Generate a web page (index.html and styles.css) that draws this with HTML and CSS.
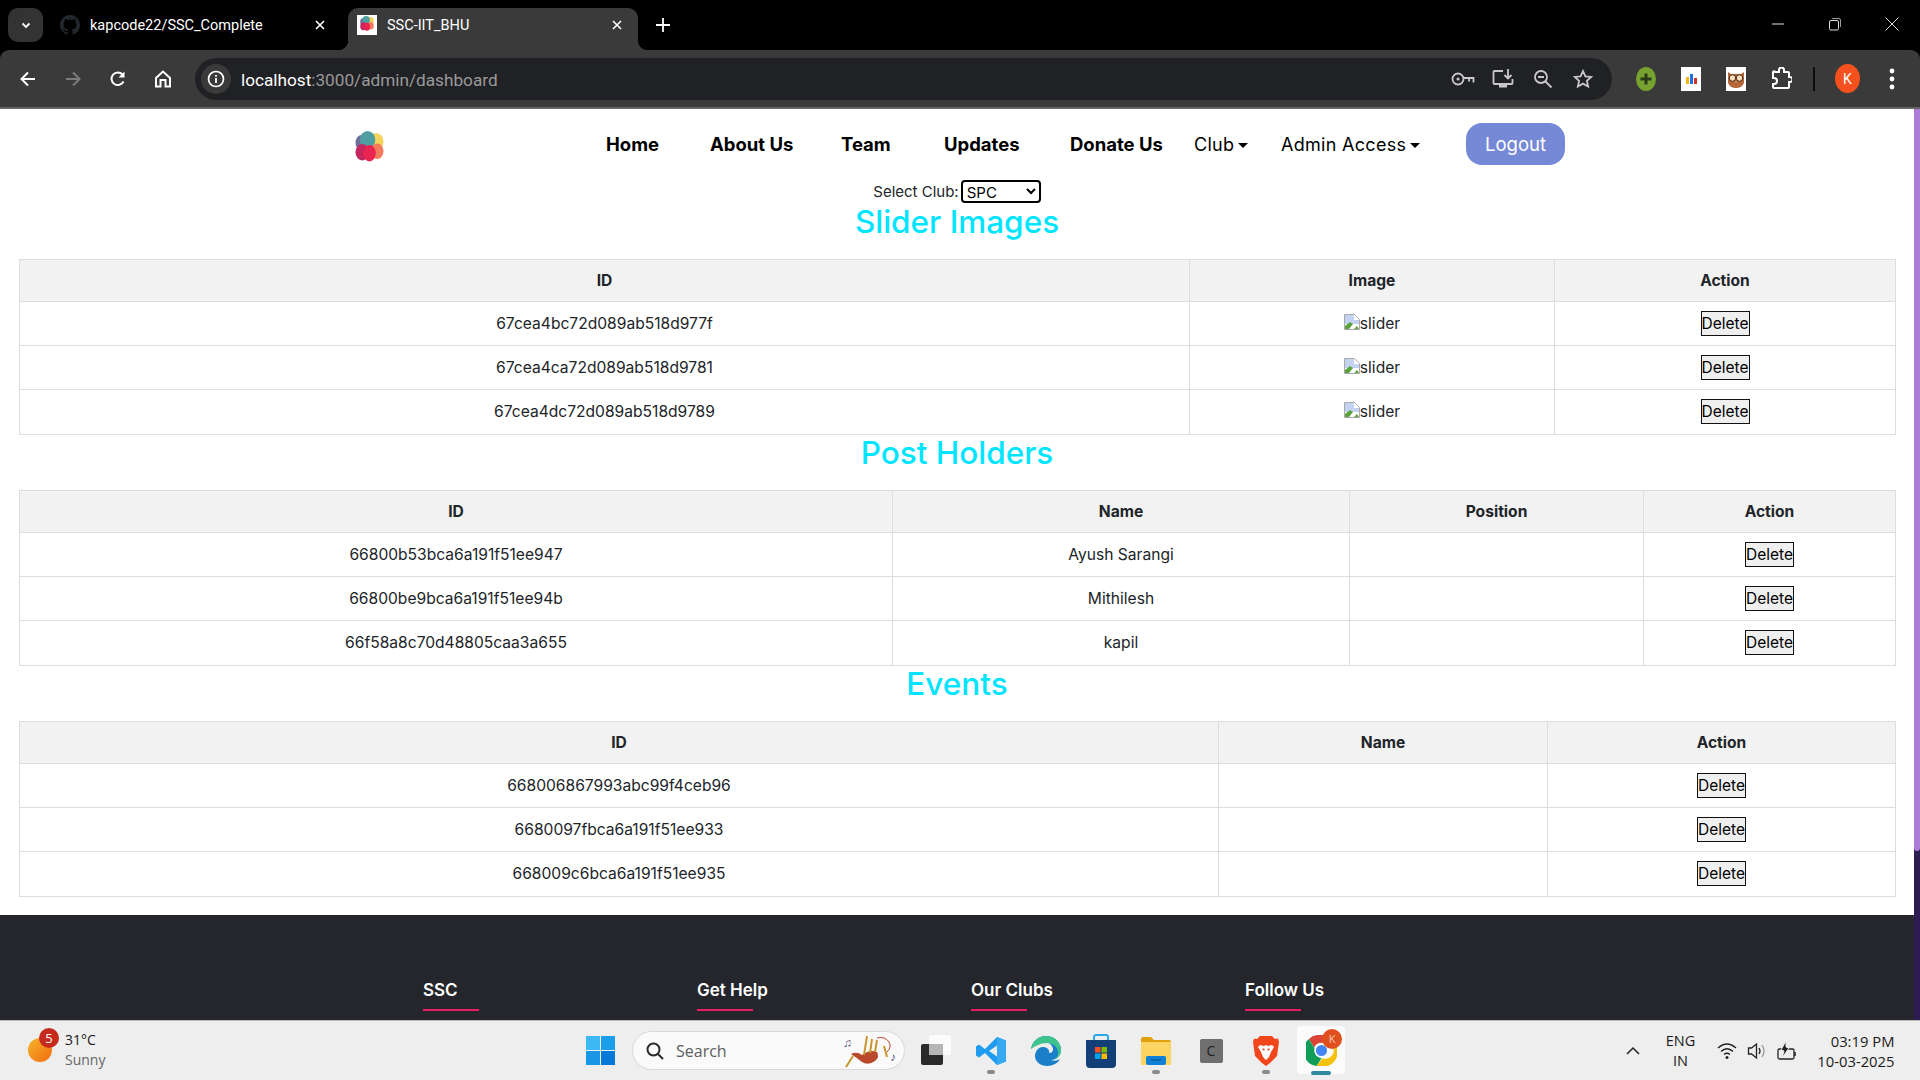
FILE: index.html
```html
<!DOCTYPE html>
<html lang="en">
<head>
    <meta charset="UTF-8">
    <meta name="viewport" content="width=device-width, initial-scale=1.0">
    <title>SSC-IIT_BHU</title>
    <link rel="stylesheet" href="styles.css">
</head>
<body>
    <svg class="defs" aria-hidden="true">
        <symbol id="flower" viewBox="0 0 30 32">
            <ellipse cx="7" cy="12" rx="6.5" ry="8" fill="#6c6f9c"/>
            <ellipse cx="22" cy="11" rx="7.5" ry="9" fill="#f2d35c"/>
            <ellipse cx="13" cy="9" rx="8" ry="9" fill="#4f9fa2"/>
            <ellipse cx="7.5" cy="22" rx="7" ry="8.5" fill="#c5265f"/>
            <ellipse cx="23" cy="21" rx="6.5" ry="8" fill="#f47b5b"/>
            <ellipse cx="15" cy="23" rx="6.5" ry="8.5" fill="#e9254f"/>
        </symbol>
        <symbol id="broken" viewBox="0 0 16 16">
            <path d="M.5.5h10l5 5v10H.5z" fill="#fff" stroke="#a9a9a9"/>
            <path d="M1 1h9v5h5v4H1z" fill="#c5d3f2"/>
            <path d="M1 15v-3l5-4 3 2-4 5zM10 15l3-3 2 3z" fill="#5ca33f"/>
        </symbol>
    </svg>

    <!-- tab strip -->
    <div class="tabstrip">
        <div class="tab-menu">
            <svg width="12" height="12" viewBox="0 0 12 12"><path d="M2.5 4.5 6 8l3.5-3.5" fill="none" stroke="#fff" stroke-width="1.8"/></svg>
        </div>
        <div class="tab">
            <svg class="tab-icon" width="20" height="20" viewBox="0 0 16 16"><path fill="#22272e" d="M8 0C3.58 0 0 3.58 0 8c0 3.54 2.29 6.53 5.47 7.59.4.07.55-.17.55-.38 0-.19-.01-.82-.01-1.49-2.01.37-2.53-.49-2.69-.94-.09-.23-.48-.94-.82-1.13-.28-.15-.68-.52-.01-.53.63-.01 1.08.58 1.23.82.72 1.21 1.87.87 2.33.66.07-.52.28-.87.51-1.07-1.78-.2-3.64-.89-3.64-3.95 0-.87.31-1.59.82-2.15-.08-.2-.36-1.02.08-2.12 0 0 .67-.21 2.2.82.64-.18 1.32-.27 2-.27s1.36.09 2 .27c1.53-1.04 2.2-.82 2.2-.82.44 1.1.16 1.92.08 2.12.51.56.82 1.27.82 2.15 0 3.07-1.87 3.75-3.65 3.95.29.25.54.73.54 1.48 0 1.07-.01 1.93-.01 2.2 0 .21.15.46.55.38A8.013 8.013 0 0016 8c0-4.42-3.58-8-8-8z"/></svg>
            <span class="tab-title">kapcode22/SSC_Complete</span>
            <svg width="12" height="12" viewBox="0 0 12 12"><path d="M2 2l8 8M10 2l-8 8" stroke="#fff" stroke-width="1.6"/></svg>
        </div>
        <div class="tab tab-active">
            <span class="tab-favicon"><svg width="14" height="15"><use href="#flower"/></svg></span>
            <span class="tab-title">SSC-IIT_BHU</span>
            <svg width="12" height="12" viewBox="0 0 12 12"><path d="M2 2l8 8M10 2l-8 8" stroke="#fff" stroke-width="1.6"/></svg>
        </div>
        <div class="tab-new">
            <svg width="14" height="14" viewBox="0 0 14 14"><path d="M7 0v14M0 7h14" stroke="#fff" stroke-width="1.8"/></svg>
        </div>
        <div class="window-controls">
            <div class="win-btn"><svg width="14" height="14" viewBox="0 0 14 14"><path d="M1 7h12" stroke="#ddd"/></svg></div>
            <div class="win-btn"><svg width="14" height="14" viewBox="0 0 14 14"><rect x="1.5" y="3.5" width="9" height="9.5" rx="1.5" fill="none" stroke="#ddd"/><path d="M4 1.5h7a1.5 1.5 0 0 1 1.5 1.5v7" fill="none" stroke="#999"/></svg></div>
            <div class="win-btn"><svg width="14" height="14" viewBox="0 0 14 14"><path d="M.5.5l13 13M13.5.5l-13 13" stroke="#ddd"/></svg></div>
        </div>
    </div>

    <!-- toolbar -->
    <div class="toolbar">
        <div class="tool"><svg width="20" height="20" viewBox="0 0 20 20"><path d="M17 10H4M10 3.5 3.5 10l6.500 6.500" fill="none" stroke="#fff" stroke-width="2"/></svg></div>
        <div class="tool"><svg width="20" height="20" viewBox="0 0 20 20"><path d="M3 10h13M10 3.500l6.500 6.500L10 16.500" fill="none" stroke="#7b7b7b" stroke-width="2"/></svg></div>
        <div class="tool"><svg width="20" height="20" viewBox="0 0 20 20"><path d="M15.500 12.500A6.300 6.300 0 1 1 14.500 5.500" fill="none" stroke="#fff" stroke-width="2"/><path d="M16.500 2.500v6h-6z" fill="#fff"/></svg></div>
        <div class="tool"><svg width="20" height="20" viewBox="0 0 20 20"><path d="M3 9 10 2.500 17 9v8.500h-4.500V11h-5v6.500H3z" fill="none" stroke="#fff" stroke-width="2"/></svg></div>
        <div class="address">
            <div class="site-info"><svg width="18" height="18" viewBox="0 0 18 18"><circle cx="9" cy="9" r="7.500" fill="none" stroke="#fff" stroke-width="1.700"/><path d="M9 8v5M9 5v1.800" stroke="#fff" stroke-width="1.800"/></svg></div>
            <div class="url"><span class="url-host">localhost</span>:3000/admin/dashboard</div>
            <div class="addr-icon"><svg width="24" height="18" viewBox="0 0 24 18"><circle cx="7" cy="9" r="5.500" fill="none" stroke="#c8c8c8" stroke-width="1.800"/><circle cx="7" cy="9" r="1.500" fill="#c8c8c8"/><path d="M12 8h10.500v4.500M18 8v3.500" fill="none" stroke="#c8c8c8" stroke-width="1.800"/></svg></div>
            <div class="addr-icon"><svg width="22" height="22" viewBox="0 0 22 22"><path d="M11 3H2.500a1 1 0 0 0-1 1v11a1 1 0 0 0 1 1h17a1 1 0 0 0 1-1v-4" fill="none" stroke="#c8c8c8" stroke-width="1.800"/><path d="M7 19.500h8V17H7z" fill="#c8c8c8"/><path d="M16 1v9M12.500 7l3.500 3.500L19.500 7" fill="none" stroke="#c8c8c8" stroke-width="1.800"/></svg></div>
            <div class="addr-icon"><svg width="20" height="20" viewBox="0 0 20 20"><circle cx="8" cy="8" r="6" fill="none" stroke="#c8c8c8" stroke-width="1.800"/><path d="M12.500 12.500 18.500 18.500M5 8h6" stroke="#c8c8c8" stroke-width="1.800"/></svg></div>
            <div class="addr-icon"><svg width="20" height="20" viewBox="0 0 20 20"><path d="M10 2l2.400 5.300 5.800.6-4.300 3.900 1.200 5.700L10 14.600l-5.100 2.900 1.200-5.700L1.800 7.900l5.800-.6z" fill="none" stroke="#c8c8c8" stroke-width="1.800"/></svg></div>
        </div>
        <div class="extensions">
            <div class="tool"><svg width="20" height="24" viewBox="0 0 20 24"><ellipse cx="10" cy="12" rx="10" ry="12" fill="#78a22f"/><path d="M10 6.500v11M4.500 12h11" stroke="#2b3a1a" stroke-width="3"/></svg></div>
            <div class="tool"><svg width="20" height="24" viewBox="0 0 20 24"><rect width="20" height="24" fill="#fff"/><rect x="5" y="10" width="3" height="7" fill="#f5b800"/><rect x="9" y="7" width="3" height="10" fill="#1a73e8"/><rect x="13" y="11" width="3" height="6" fill="#d93025"/></svg></div>
            <div class="tool"><svg width="20" height="24" viewBox="0 0 20 24"><rect width="20" height="24" fill="#fff"/><path d="M2 5l3 2h10l3-2v11q-2 5-8 5t-8-5z" fill="#b5673a"/><circle cx="6.500" cy="11" r="3.300" fill="#f3dcb8" stroke="#4a2b18"/><circle cx="13.500" cy="11" r="3.300" fill="#f3dcb8" stroke="#4a2b18"/><path d="M9 14h2l-1 2z" fill="#e8a33d"/></svg></div>
            <div class="tool"><svg width="22" height="24" viewBox="0 0 22 24"><path d="M5 5h4V3a2.500 2.500 0 0 1 5 0v2h4a1 1 0 0 1 1 1v4h1a2.500 2.500 0 0 1 0 5h-1v5a1 1 0 0 1-1 1H4a1 1 0 0 1-1-1v-3h1a3 3 0 0 0 0-6H3V6a1 1 0 0 1 2-1z" fill="none" stroke="#fff" stroke-width="2"/></svg></div>
            <div class="ext-sep"></div>
            <div class="avatar">K</div>
            <div class="tool"><svg width="6" height="22" viewBox="0 0 6 22"><circle cx="3" cy="3" r="2.400" fill="#fff"/><circle cx="3" cy="11" r="2.400" fill="#fff"/><circle cx="3" cy="19" r="2.400" fill="#fff"/></svg></div>
        </div>
    </div>

    <div class="viewport">
        <div class="page">
            <nav class="navbar">
                <svg class="logo" width="29" height="31"><use href="#flower"/></svg>
                <a class="nav-link" href="#">Home</a>
                <a class="nav-link" href="#">About Us</a>
                <a class="nav-link" href="#">Team</a>
                <a class="nav-link" href="#">Updates</a>
                <a class="nav-link" href="#">Donate Us</a>
                <a class="nav-drop" href="#">Club</a>
                <a class="nav-drop" href="#">Admin Access</a>
                <button class="logout">Logout</button>
            </nav>

            <div class="club-select">
                <label for="club">Select Club:</label>
                <select id="club">
                    <option>SPC</option>
                </select>
            </div>

            <h2>Slider Images</h2>
            <table class="t-slider">
                <colgroup><col class="c1"><col class="c2"><col class="c3"></colgroup>
                <tr><th>ID</th><th>Image</th><th>Action</th></tr>
                <tr><td>67cea4bc72d089ab518d977f</td><td><span class="alt"><svg width="16" height="16"><use href="#broken"/></svg>slider</span></td><td><button class="del">Delete</button></td></tr>
                <tr><td>67cea4ca72d089ab518d9781</td><td><span class="alt"><svg width="16" height="16"><use href="#broken"/></svg>slider</span></td><td><button class="del">Delete</button></td></tr>
                <tr><td>67cea4dc72d089ab518d9789</td><td><span class="alt"><svg width="16" height="16"><use href="#broken"/></svg>slider</span></td><td><button class="del">Delete</button></td></tr>
            </table>

            <h2>Post Holders</h2>
            <table class="t-post">
                <colgroup><col class="c1"><col class="c2"><col class="c3"><col class="c4"></colgroup>
                <tr><th>ID</th><th>Name</th><th>Position</th><th>Action</th></tr>
                <tr><td>66800b53bca6a191f51ee947</td><td>Ayush Sarangi</td><td></td><td><button class="del">Delete</button></td></tr>
                <tr><td>66800be9bca6a191f51ee94b</td><td>Mithilesh</td><td></td><td><button class="del">Delete</button></td></tr>
                <tr><td>66f58a8c70d48805caa3a655</td><td>kapil</td><td></td><td><button class="del">Delete</button></td></tr>
            </table>

            <h2>Events</h2>
            <table class="t-events">
                <colgroup><col class="c1"><col class="c2"><col class="c3"></colgroup>
                <tr><th>ID</th><th>Name</th><th>Action</th></tr>
                <tr><td>668006867993abc99f4ceb96</td><td></td><td><button class="del">Delete</button></td></tr>
                <tr><td>6680097fbca6a191f51ee933</td><td></td><td><button class="del">Delete</button></td></tr>
                <tr><td>668009c6bca6a191f51ee935</td><td></td><td><button class="del">Delete</button></td></tr>
            </table>

            <footer class="footer">
                <div class="footer-col"><h4>SSC</h4></div>
                <div class="footer-col"><h4>Get Help</h4></div>
                <div class="footer-col"><h4>Our Clubs</h4></div>
                <div class="footer-col"><h4>Follow Us</h4></div>
            </footer>
        </div>
        <div class="scrollbar"><div class="scroll-thumb"></div></div>
    </div>

    <!-- windows taskbar -->
    <div class="taskbar">
        <div class="weather">
            <div class="sun"><span class="sun-badge">5</span></div>
            <div class="weather-text">
                <div>31°C</div>
                <div class="muted">Sunny</div>
            </div>
        </div>
        <div class="task-slot">
            <svg width="29" height="29" viewBox="0 0 29 29"><rect width="14" height="14" fill="#3cb9f5"/><rect x="15" width="14" height="14" fill="#1c9dea"/><rect y="15" width="14" height="14" fill="#1a96e6"/><rect x="15" y="15" width="14" height="14" fill="#0a78d6"/></svg>
        </div>
        <div class="search">
            <svg width="18" height="18" viewBox="0 0 18 18"><circle cx="7.500" cy="7.500" r="6" fill="none" stroke="#2a2a2a" stroke-width="2"/><path d="M12 12l5 5" stroke="#2a2a2a" stroke-width="2"/></svg>
            <span class="search-text">Search</span>
            <svg class="bagpipe" width="54" height="34" viewBox="0 0 54 34"><path d="M8 20q6-3 11 1 8-6 15-3 3 5-2 9-7 5-13 1-5-4-11-8z" fill="#b9492b"/><path d="M3 33 10 22M21 21 24 2M27 19 29 5M32 18 34 6" stroke="#c9962e" stroke-width="2"/><path d="M34 4q8-2 12 4 3 5-2 10" fill="none" stroke="#b9492b"/><path d="M41 12l3 11" stroke="#c9962e" stroke-width="2"/><text x="0" y="13" class="note">♫</text><text x="47" y="27" class="note">♪</text></svg>
        </div>
        <div class="task-slot">
            <svg width="30" height="32" viewBox="0 0 30 32"><rect x="0" y="9" width="22" height="21" rx="2" fill="#2a2a2a"/><rect x="8" y="0" width="22" height="20" rx="2" fill="#fff" fill-opacity=".75"/><rect x="8" y="9" width="14" height="11" fill="#b5b5b5"/></svg>
        </div>
        <div class="task-slot running">
            <svg width="30" height="30" viewBox="0 0 30 30"><path d="M21 1 9 13 3 8.500 0 10.500v9L3 21.500 9 17l12 12 9-3.500V4.500z" fill="#1f9cf0"/><path d="M21 1v28l9-3.500V4.500z" fill="#35aaf2"/><path d="M21 9.500 13 15l8 5.500z" fill="#eeeeee"/></svg>
        </div>
        <div class="task-slot">
            <svg width="30" height="30" viewBox="0 0 30 30"><path d="M15 0C7 0 1 6 0 13c3-5 8-7 13-7 6 0 9 4 9 8 0 2-2 3-4 3 1-3-2-6-6-6-5 0-8 5-8 9 0 6 6 10 12 10 6 0 11-3 13-7-3 2-6 2-9 1 5 0 10-4 10-10C30 6 23 0 15 0z" fill="#1a7ec9"/><path d="M15 0c8 0 15 6 15 14 0 6-5 10-10 10 4 0 8-4 7-9-1-5-6-8-11-8-6 0-12 3-16 6C1 6 7 0 15 0z" fill="#3cc48c"/></svg>
        </div>
        <div class="task-slot">
            <svg width="30" height="34" viewBox="0 0 30 34"><path d="M8 7V3a2 2 0 0 1 2-2h10a2 2 0 0 1 2 2v4" fill="none" stroke="#2aa8e8" stroke-width="2"/><path d="M0 6h30v24a4 4 0 0 1-4 4H4a4 4 0 0 1-4-4z" fill="#123f78"/><rect x="9" y="13" width="5.500" height="5.500" fill="#f25022"/><rect x="15.500" y="13" width="5.500" height="5.500" fill="#7fba00"/><rect x="9" y="19.500" width="5.500" height="5.500" fill="#00a4ef"/><rect x="15.500" y="19.500" width="5.500" height="5.500" fill="#ffb900"/></svg>
        </div>
        <div class="task-slot running">
            <svg width="30" height="28" viewBox="0 0 30 28"><path d="M0 2a2 2 0 0 1 2-2h8l3 3h15a2 2 0 0 1 2 2v6H0z" fill="#dfa00e"/><path d="M0 5h30v23H0z" fill="#fcd462"/><rect x="5" y="19" width="20" height="9" rx="2" fill="#0f80d7"/><path d="M10 23h10" stroke="#0a4f8a"/></svg>
        </div>
        <div class="task-slot">
            <div class="c-app">C</div>
        </div>
        <div class="task-slot running">
            <svg width="26" height="30" viewBox="0 0 26 30"><path d="M7 0h12l3 3 3-.5L26 6l-2 14-7 7-4 3-4-3-7-7L0 6l1-3.500L4 3z" fill="#f1461c"/><path d="M7 9l4 1 2-1 2 1 4-1 2 2-3 5-2 5-3 3-3-3-2-5-3-5z" fill="#fff"/><path d="M9.500 13l2 1M16.500 13l-2 1" stroke="#f1461c" stroke-width="1.500"/></svg>
        </div>
        <div class="task-slot chrome-slot">
            <div class="chrome-tile">
                <svg width="31" height="31" viewBox="0 0 32 32"><path d="M16 0a16 16 0 0 1 14 8H16a8 8 0 0 0-7.500 5L3 4a16 16 0 0 1 13-4z" fill="#db4437"/><path d="M3 4l6 10a8 8 0 0 0 7 10l-5 8A16 16 0 0 1 3 4z" fill="#0f9d58"/><path d="M30 8a16 16 0 0 1-19 24l6-8a8 8 0 0 0 6-16z" fill="#f4c20d"/><circle cx="16" cy="16" r="6.500" fill="#4285f4" stroke="#fff" stroke-width="1.500"/></svg>
                <span class="chrome-badge">K</span>
            </div>
        </div>
        <div class="tray">
            <div class="tray-icon"><svg width="14" height="9" viewBox="0 0 14 9"><path d="M1 8l6-6 6 6" fill="none" stroke="#222" stroke-width="1.500"/></svg></div>
            <div class="lang"><div>ENG</div><div>IN</div></div>
            <div class="tray-icon"><svg width="20" height="18" viewBox="0 0 20 18"><path d="M1 6q9-8 18 0M4 9.500q6-5.500 12 0M7 12.500q3-2.500 6 0" fill="none" stroke="#222" stroke-width="1.300"/><circle cx="10" cy="15.500" r="1.500" fill="#222"/></svg></div>
            <div class="tray-icon"><svg width="20" height="20" viewBox="0 0 20 20"><path d="M1.500 7h3L9.500 3v14l-5-4h-3z" fill="none" stroke="#222" stroke-width="1.300"/><path d="M12 7q2 3 0 6" fill="none" stroke="#222" stroke-width="1.300"/><path d="M15 4q4 6 0 12" fill="none" stroke="#999" stroke-width="1.300"/></svg></div>
            <div class="tray-icon tray-batt"><svg width="22" height="22" viewBox="0 0 22 22"><rect x="2" y="9" width="16" height="10" rx="1.500" fill="none" stroke="#222" stroke-width="1.300"/><path d="M19 12v4" stroke="#222" stroke-width="1.500"/><path d="M10 1 5 10l3 1-2 7 7-10-3-1z" fill="#222" stroke="#eee"/></svg></div>
            <div class="clock"><div>03:19 PM</div><div>10-03-2025</div></div>
        </div>
    </div>
</body>
</html>
```

FILE: styles.css
```css
* {
    box-sizing: border-box;
}

html, body {
    margin: 0;
    height: 100%;
}

body {
    width: 1920px;
    height: 1080px;
    overflow: hidden;
    display: flex;
    flex-direction: column;
    background-color: #000;
    font-family: Inter, "Open Sans", sans-serif;
}

.defs {
    display: none;
}

/* tab strip */
.tabstrip {
    height: 50px;
    flex-shrink: 0;
    display: flex;
    background-color: #000;
    padding-left: 8px;
    font-family: Roboto, sans-serif;
    font-size: 14.5px;
    color: #fff;
}

.tab-menu {
    width: 35px;
    height: 34px;
    margin-top: 8px;
    border-radius: 10px;
    background-color: #333;
    display: flex;
    align-items: center;
    justify-content: center;
}

.tab {
    width: 305px;
    display: flex;
    align-items: center;
    padding: 0 22px 0 17px;
}

.tab-icon {
    margin-right: 10px;
}

.tab-title {
    flex: 1;
}

.tab-active {
    position: relative;
    width: 290px;
    height: 42px;
    margin-top: 8px;
    padding: 0 15px 8px 9px;
    background-color: #3a3a3a;
    border-radius: 10px 10px 0 0;
}

.tab-active::before,
.tab-active::after {
    content: "";
    position: absolute;
    bottom: 0;
    width: 10px;
    height: 10px;
}

.tab-active::before {
    left: -10px;
    background: radial-gradient(circle at 0 0, transparent 10px, #3a3a3a 10.5px);
}

.tab-active::after {
    right: -10px;
    background: radial-gradient(circle at 100% 0, transparent 10px, #3a3a3a 10.5px);
}

.tab-favicon {
    width: 20px;
    height: 20px;
    margin-right: 10px;
    background-color: #fff;
    display: flex;
    justify-content: center;
    padding-top: 1px;
}

.tab-new {
    width: 50px;
    display: flex;
    align-items: center;
    justify-content: center;
    padding-bottom: 1px;
}

.window-controls {
    margin-left: auto;
    display: flex;
}

.win-btn {
    width: 57px;
    display: flex;
    align-items: center;
    justify-content: center;
    padding-bottom: 2px;
}

/* toolbar */
.toolbar {
    height: 59px;
    flex-shrink: 0;
    display: flex;
    align-items: flex-start;
    padding: 8px 0 0 5px;
    background-color: #3a3a3a;
    border-bottom: 2px solid #646464;
    border-radius: 9px 9px 0 0;
}

.tool {
    width: 45px;
    height: 42px;
    flex-shrink: 0;
    display: flex;
    align-items: center;
    justify-content: center;
}

.address {
    width: 1417px;
    height: 42px;
    margin-left: 10px;
    display: flex;
    align-items: center;
    padding: 0 9px 0 6px;
    border-radius: 21px;
    background-color: #202124;
}

.site-info {
    width: 30px;
    height: 30px;
    margin-right: 10px;
    border-radius: 50%;
    background-color: #3a3a3a;
    display: flex;
    align-items: center;
    justify-content: center;
}

.url {
    flex: 1;
    padding-top: 2px;
    font-family: Roboto, sans-serif;
    font-size: 17.2px;
    color: #9a9a9a;
}

.url-host {
    color: #fff;
}

.addr-icon {
    width: 40px;
    display: flex;
    justify-content: center;
}

.extensions {
    margin-left: 11px;
    display: flex;
    align-items: flex-start;
}

.ext-sep {
    width: 2px;
    height: 24px;
    margin: 9px 20px 0 10px;
    background-color: #0c0c0c;
}

.avatar {
    width: 25px;
    height: 29px;
    margin: 6px 9px 0 0;
    border-radius: 50%;
    background-color: #f4511e;
    color: #fff;
    font-family: Roboto, sans-serif;
    font-size: 14px;
    display: flex;
    align-items: center;
    justify-content: center;
}

/* page */
.viewport {
    flex: 1;
    min-height: 0;
    display: flex;
}

.page {
    width: 1914px;
    background-color: #fff;
    overflow: hidden;
    color: #212529;
}

.scrollbar {
    width: 6px;
    background-color: #2d1c52;
}

.scroll-thumb {
    height: 742px;
    border-radius: 0 0 3px 3px;
    background-color: #ab7bd6;
}

.navbar {
    height: 71px;
    padding: 14px 0 0 355px;
    display: grid;
    grid-template-columns: 251px 104px 131px 103px 126px 124px 87px 185px 99px;
    grid-template-rows: 42px;
    align-items: center;
    white-space: nowrap;
}

.logo {
    margin-top: 5px;
}

.nav-link {
    font-size: 18.5px;
    font-weight: 700;
    color: #000;
    text-decoration: none;
}

.nav-drop {
    font-size: 18px;
    letter-spacing: .3px;
    color: #000;
    text-decoration: none;
}

.nav-drop::after {
    content: "";
    display: inline-block;
    margin-left: 4px;
    vertical-align: 3px;
    border-top: 5px solid #000;
    border-left: 5px solid transparent;
    border-right: 5px solid transparent;
}

.logout {
    height: 42px;
    padding: 0;
    border: none;
    border-radius: 16px;
    background-color: #7589d6;
    color: #fff;
    font-family: inherit;
    font-size: 18.5px;
}

.club-select {
    height: 23px;
    margin-bottom: 1px;
    display: flex;
    justify-content: center;
    align-items: center;
    font-size: 15px;
}

.club-select select {
    width: 80px;
    height: 23px;
    margin-left: 2px;
    font-family: inherit;
    font-size: 15px;
    border: 2px solid #000;
    border-radius: 4px;
    background-color: #fff;
    color: #000;
}

h2 {
    height: 38px;
    margin: 0 0 17px;
    text-align: center;
    font-size: 31.5px;
    font-weight: 500;
    line-height: 36px;
    color: #00e5ff;
}

table {
    width: 1876px;
    margin: 0 19px;
    table-layout: fixed;
    border-collapse: collapse;
    font-size: 15.6px;
}

th, td {
    padding: 0 0 1px;
    border: 1px solid #ddd;
    text-align: center;
}

th {
    height: 42px;
    background-color: #f2f2f2;
    font-weight: 700;
}

td {
    height: 44px;
}

tr:last-child td {
    height: 45px;
}

.t-slider .c1 { width: 1170px; }
.t-slider .c2 { width: 365px; }
.t-slider .c3 { width: 341px; }

.t-post .c1 { width: 873px; }
.t-post .c2 { width: 457px; }
.t-post .c3 { width: 294px; }
.t-post .c4 { width: 252px; }

.t-events .c1 { width: 1199px; }
.t-events .c2 { width: 329px; }
.t-events .c3 { width: 348px; }

.alt svg {
    vertical-align: -1px;
}

.del {
    width: 49px;
    height: 25px;
    padding: 0;
    border: 1px solid #111;
    background-color: #efefef;
    color: #000;
    font-family: inherit;
    font-size: 15.5px;
}

.footer {
    margin-top: 18px;
    height: 120px;
    padding: 63px 0 0 423px;
    display: flex;
    background-color: #24262b;
}

.footer-col {
    width: 274px;
}

.footer-col h4 {
    display: inline-block;
    margin: 0;
    font-size: 17px;
    font-weight: 600;
    line-height: 24px;
    color: #fff;
}

.footer-col h4::after {
    content: "";
    display: block;
    width: 56px;
    height: 2px;
    margin-top: 7px;
    background-color: #e91e63;
}

/* taskbar */
.taskbar {
    height: 60px;
    flex-shrink: 0;
    display: flex;
    align-items: center;
    background-color: #eee;
    border-top: 1px solid #bbb;
    font-family: "Open Sans", sans-serif;
    font-size: 14px;
    color: #1a1a1a;
}

.weather {
    width: 572.5px;
    padding: 0 0 2px 28px;
    display: flex;
    align-items: center;
}

.sun {
    position: relative;
    width: 24px;
    height: 24px;
    border-radius: 50%;
    background: linear-gradient(135deg, #f4b62a, #f26a10);
    margin-right: 13px;
}

.sun-badge {
    position: absolute;
    top: -10px;
    left: 11px;
    width: 20px;
    height: 20px;
    border-radius: 50%;
    background-color: #c42b1c;
    color: #fff;
    font-size: 13px;
    line-height: 20px;
    text-align: center;
}

.weather-text {
    line-height: 20px;
}

.muted {
    color: #666;
}

.task-slot {
    position: relative;
    width: 55px;
    height: 59px;
    flex-shrink: 0;
    display: flex;
    align-items: center;
    justify-content: center;
}

.running::after {
    content: "";
    position: absolute;
    bottom: 6px;
    left: 23.5px;
    width: 8px;
    height: 4px;
    border-radius: 2px;
    background-color: #8a8a8a;
}

.search {
    width: 273px;
    height: 39px;
    margin: 0 3.5px 0 4.5px;
    padding: 0 7px 0 13px;
    display: flex;
    align-items: center;
    flex-shrink: 0;
    border: 1px solid #d8d8d8;
    border-radius: 20px;
    background-color: #fafafa;
}

.search-text {
    flex: 1;
    margin-left: 12px;
    font-size: 16px;
    color: #5d5d5d;
}

.note {
    font-size: 12px;
    fill: #5f4f78;
}

.c-app {
    width: 23px;
    height: 24px;
    border-radius: 2px;
    background-color: #6f6f6f;
    color: #1c1c1c;
    font-size: 14px;
    line-height: 24px;
    text-align: center;
}

.chrome-tile {
    position: relative;
    width: 48px;
    height: 48px;
    margin-bottom: 1px;
    border-radius: 4px;
    background-color: #fbfbfb;
    display: flex;
    align-items: center;
    justify-content: center;
}

.chrome-slot::after {
    content: "";
    position: absolute;
    bottom: 5px;
    left: 17.5px;
    width: 20px;
    height: 4px;
    border-radius: 2px;
    background-color: #2e8a9e;
}

.chrome-badge {
    position: absolute;
    top: 3px;
    right: 3px;
    width: 20px;
    height: 20px;
    border-radius: 50%;
    background-color: #e0501f;
    color: #f8c9b4;
    font-size: 11px;
    line-height: 20px;
    text-align: center;
}

.tray {
    margin-left: 269px;
    display: flex;
    align-items: center;
}

.tray-icon {
    width: 30px;
    display: flex;
    justify-content: center;
}

.lang {
    width: 50px;
    margin: 0 6px 0 8px;
    text-align: center;
    line-height: 20px;
    font-size: 14.5px;
}

.tray-batt {
    margin-right: 3px;
}

.clock {
    width: 90px;
    text-align: right;
    line-height: 20px;
    font-size: 14.8px;
}
```
